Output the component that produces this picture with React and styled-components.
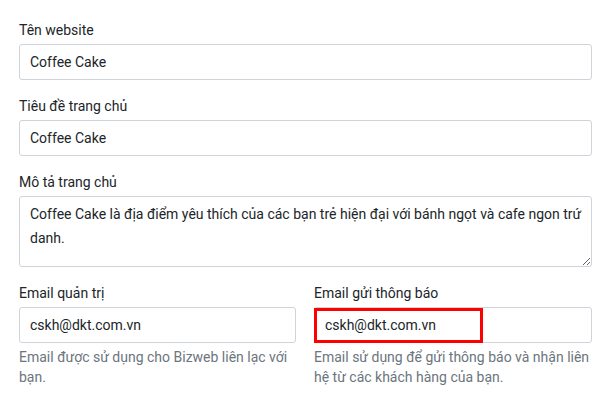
import React from 'react';
import styled, { createGlobalStyle } from 'styled-components';

const Global = createGlobalStyle`
  html, body { margin: 0; padding: 0; background: #fff; }
  body { font-family: Roboto, "Liberation Sans", sans-serif; font-size: 14px; color: #212529; }
  * { box-sizing: border-box; }
`;

const Form = styled.form`
  width: 573px;
  margin-left: 19px;
  padding-top: 20px;
  display: flex;
  flex-direction: column;
  gap: 16px;
`;

const Group = styled.div`
  display: flex;
  flex-direction: column;
  position: relative;
`;

const Label = styled.label`
  display: block;
  font-size: 14px;
  line-height: 20px;
  color: #212529;
  margin-bottom: 4px;
`;

const Input = styled.input`
  display: block;
  width: 100%;
  height: 36px;
  padding: 0 10px;
  font-family: inherit;
  font-size: 14px;
  line-height: 34px;
  color: #212529;
  background: #fff;
  border: 1px solid #ced4da;
  border-radius: 3px;
  outline: none;
`;

const TextArea = styled.textarea`
  display: block;
  width: 100%;
  height: 71px;
  padding: 5px 8px 5px 10px;
  font-family: inherit;
  font-size: 14px;
  line-height: 24px;
  color: #212529;
  background: #fff;
  border: 1px solid #ced4da;
  border-radius: 3px;
  outline: none;
  resize: vertical;
  overflow: hidden;
`;

const Row = styled.div`
  display: grid;
  grid-template-columns: 277px 278px;
  column-gap: 18px;
`;

const FieldWrap = styled.div`
  position: relative;
`;

const Help = styled.small`
  display: block;
  margin-top: 4px;
  font-size: 14px;
  line-height: 20px;
  color: #6c757d;
`;

const Highlight = styled.span`
  position: absolute;
  left: 0;
  top: 1px;
  width: 169px;
  height: 35px;
  border: 3px solid #ff0000;
  pointer-events: none;
`;

export default function App() {
  return (
    <>
      <Global />
      <Form onSubmit={(e) => e.preventDefault()}>
        <Group>
          <Label>Tên website</Label>
          <Input readOnly value="Coffee Cake" />
        </Group>
        <Group>
          <Label>Tiêu đề trang chủ</Label>
          <Input readOnly value="Coffee Cake" />
        </Group>
        <Group>
          <Label>Mô tả trang chủ</Label>
          <TextArea
            readOnly
            value="Coffee Cake là địa điểm yêu thích của các bạn trẻ hiện đại với bánh ngọt và cafe ngon trứ danh."
          />
        </Group>
        <Row>
          <Group>
            <Label>Email quản trị</Label>
            <Input readOnly value="cskh@dkt.com.vn" />
            <Help>Email được sử dụng cho Bizweb liên lạc với bạn.</Help>
          </Group>
          <Group>
            <Label>Email gửi thông báo</Label>
            <FieldWrap>
              <Input readOnly value="cskh@dkt.com.vn" />
              <Highlight />
            </FieldWrap>
            <Help>Email sử dụng để gửi thông báo và nhận liên hệ từ các khách hàng của bạn.</Help>
          </Group>
        </Row>
      </Form>
    </>
  );
}
